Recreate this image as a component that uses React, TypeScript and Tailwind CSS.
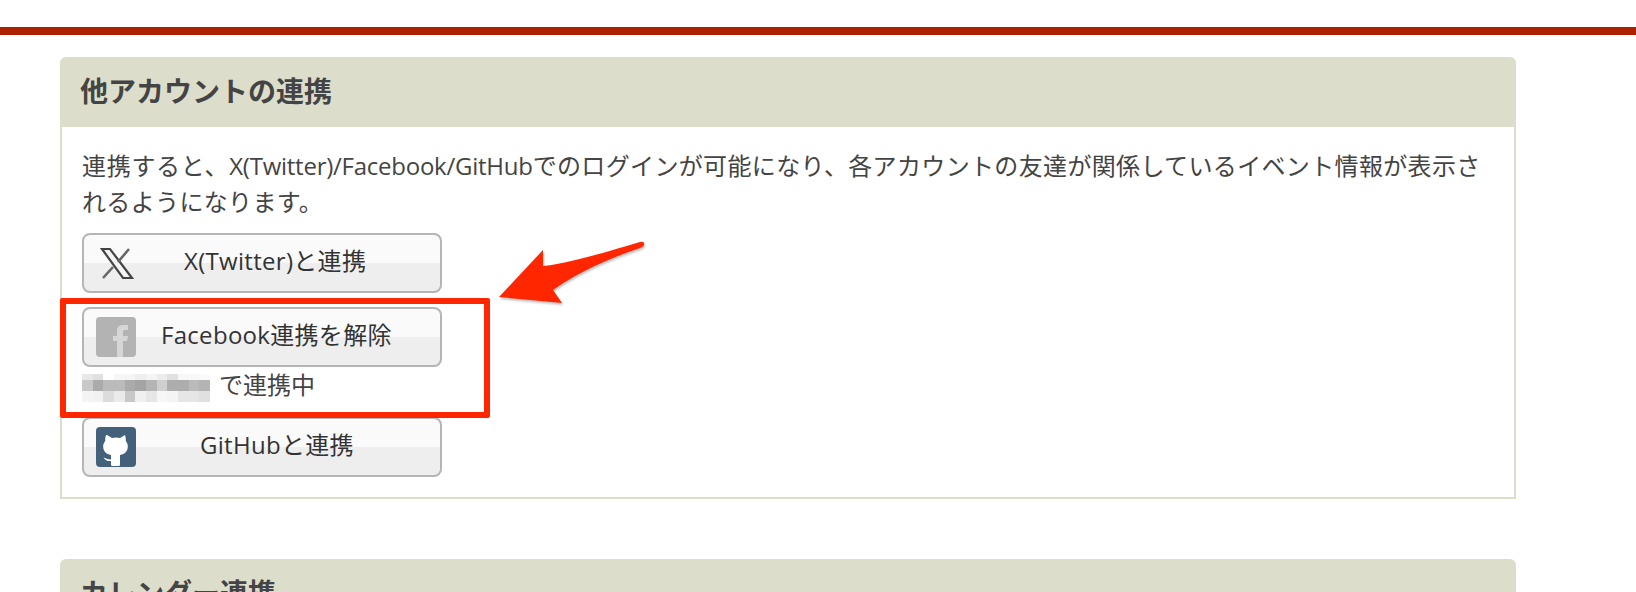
const jp = "font-['Open_Sans','Noto_Sans_CJK_JP',sans-serif]";

const mosaic = [
  { y: 0, h: 6, cells: ['#e8e8e8', '#e0e0e0', '#ffffff', '#f6f6f6', '#f6f6f6', '#eeeeee', '#f4f4f4', '#ececec', '#e0e0e0', '#f8f8f8', '#f8f8f8', '#fafafa'] },
  { y: 6, h: 11, cells: ['#c8c8c8', '#ababab', '#bbbbbb', '#bbbbbb', '#ababab', '#a4a4a4', '#b4b4b4', '#cfcfcf', '#adadad', '#adadad', '#bababa', '#b4b4b4'] },
  { y: 17, h: 11, cells: ['#f4f4f4', '#f2f2f2', '#dcdcdc', '#eaeaea', '#c8c8c8', '#f0f0f0', '#e6e6e6', '#f6f6f6', '#f4f4f4', '#e6e6e6', '#e6e6e6', '#e0e0e0'] },
];

function XIcon() {
  return (
    <svg viewBox="0 0 40 40" className="w-10 h-10">
      <path d="M6 6h8l22 29h-9z" fill="#f4f4f4" stroke="#444" strokeWidth="2.2" />
      <path d="M33 6 22 19M17 24 7 35" fill="none" stroke="#666" strokeWidth="2.6" />
    </svg>
  );
}

function FacebookIcon() {
  return (
    <svg viewBox="0 0 40 40" className="w-10 h-10">
      <rect width="40" height="40" rx="4" fill="#b3b3b3" />
      <path d="M21 40V24h-4v-5h4v-5c0-4 2-6 6-6h5v5h-3c-1.500 0-2 .8-2 2v4h5l-1 5h-4v16z" fill="#d6d6d6" />
    </svg>
  );
}

function GithubIcon() {
  return (
    <svg viewBox="0 0 40 40" className="w-10 h-10">
      <rect width="40" height="40" rx="4" fill="#44617b" />
      <path d="M11 8l5 3c2.500-.7 5.500-.7 8 0l5-3c.7 2 1 4 .8 6 1.500 2 2 3.500 2 5.500 0 5-3 7.500-7.800 8.500v9.500c0 1-.8 1.500-1.500 1.500h-6c-.7 0-1.500-.5-1.500-1.500v-3.500c-3 .5-5.500-.5-7.500-3.500 2 .5 4 2 7.500 2v-4.500c-4.800-1-7.800-3.500-7.800-8.500 0-2 .5-3.500 2-5.500-.2-2 .1-4 .8-6z" fill="#fff" />
    </svg>
  );
}

function LinkButton({ icon, label, pl }: { icon: React.ReactNode; label: string; pl: string }) {
  return (
    <button className="relative flex items-center w-[360px] h-[60px] rounded-[8px] border-2 border-[#b5b5b5] bg-[linear-gradient(#fafafa_50%,#eeeeee_50%)] pl-[12px] text-[#333] text-[24px] tracking-[0.3px]">
      <span className="shrink-0">{icon}</span>
      <span className={`${pl} pb-[4px] whitespace-nowrap`}>{label}</span>
    </button>
  );
}

function Card({ title, children }: { title: string; children?: React.ReactNode }) {
  return (
    <section className="w-[1456px]">
      <h2 className="h-[70px] rounded-t-[6px] bg-[#ddddcc] pl-[20px] pb-[3px] flex items-center text-[28px] font-bold text-[#444]">{title}</h2>
      {children}
    </section>
  );
}

export default function App() {
  return (
    <div className={`${jp} relative w-[1636px] h-[592px] overflow-hidden bg-white`}>
      <div className="mt-[27px] h-[8px] bg-[#aa2200]" />
      <div className="pl-[60px] pt-[22px] flex flex-col gap-[60px]">
        <Card title="他アカウントの連携">
          <div className="h-[372px] border-2 border-t-0 border-[#ddddcc] pl-[20px] pt-[21px]">
            <p className="w-[1409px] text-[24px] leading-[36px] text-[#444] tracking-[0.35px]">
              <span className="tracking-[0.7px]">連携すると、</span>
              <span className="tracking-[-0.25px]">X(Twitter)/Facebook/GitHub</span>
              でのログインが可能になり、各アカウントの友達が関係しているイベント情報が表示されるようになります。
            </p>
            <div className="mt-[13px] flex flex-col">
              <LinkButton icon={<XIcon />} label="X(Twitter)と連携" pl="pl-[48px]" />
              <div className="mt-[14px]">
                <LinkButton icon={<FacebookIcon />} label="Facebook連携を解除" pl="pl-[25px]" />
              </div>
              <div className="flex items-start h-[50px] pt-[7px] text-[24px] leading-[22px] text-[#444]">
                <div className="flex flex-col w-[128px] mr-[9px]">
                  {mosaic.map((row) => (
                    <div key={row.y} className="flex">
                      {row.cells.map((c, i) => (
                        <span key={i} className="flex-1" style={{ background: c, height: row.h }} />
                      ))}
                    </div>
                  ))}
                </div>
                で連携中
              </div>
              <LinkButton icon={<GithubIcon />} label="GitHubと連携" pl="pl-[64px]" />
            </div>
          </div>
        </Card>
        <Card title="カレンダー連携" />
      </div>
      <div className="absolute left-[60px] top-[298px] w-[430px] h-[120px] border-[6px] border-[#ff2600] rounded-[2px]" />
      <svg className="absolute left-0 top-0 w-[1636px] h-[592px] pointer-events-none drop-shadow-[1px_2px_1px_rgba(0,0,0,0.25)]" viewBox="0 0 1636 592">
        <path d="M499 297 543 250 543 266C565 264 600 254 640 242Q645 241 644 245 643 247 640 248C610 258 578 272 553 290L562 303z" fill="#ff2600" />
      </svg>
    </div>
  );
}
